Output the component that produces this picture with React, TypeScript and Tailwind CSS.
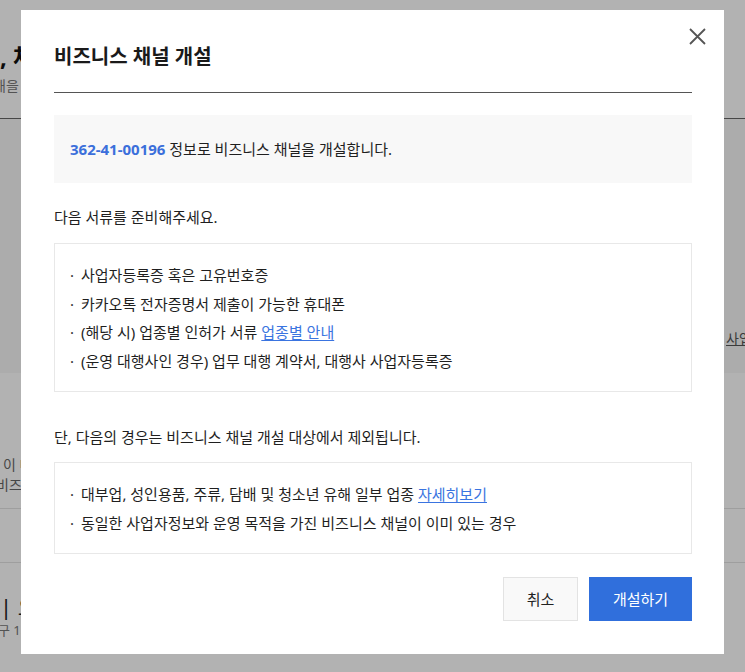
// 비즈니스 채널 개설 모달: 배경 페이지 위에 딤 처리된 오버레이와 안내 다이얼로그를 표시한다.
const FONT = "font-['Noto_Sans','Noto_Sans_CJK_KR',sans-serif]"

interface BulletBoxProps {
  items: React.ReactNode[]
}

// 회색 테두리 박스 안에 점 목록을 그린다.
const BulletBox = ({ items }: BulletBoxProps) => {
  return (
    <ul className="border border-[#e8e8e8] pl-[15px] pr-4 pt-[17px] pb-[16px]">
      {items.map((item, i) => (
        <li key={i} className="flex text-[15px] leading-[28.5px] text-[#1f1f1f]">
          <span className="w-[11px] shrink-0 text-[#333]">·</span>
          <span>{item}</span>
        </li>
      ))}
    </ul>
  )
}

// 모달 뒤에 깔린 페이지 (대부분 가려짐).
const BackgroundPage = () => {
  return (
    <div className="h-[672px] overflow-hidden bg-white">
      <div className="h-[119px] border-b border-[#666]">
        <div className="whitespace-nowrap pt-[42px] text-[24px] font-bold leading-[30px] text-[#111]">
          , 채널 관리자센터
        </div>
        <div className="-ml-[7px] whitespace-nowrap pt-[4px] text-[14px] leading-[20px] text-[#777]">
          채을 관리하고 운영해 보세요
        </div>
      </div>
      <div className="flex h-[254px] flex-col justify-end bg-[#f7f7f7] pb-[24px]">
        <div className="whitespace-nowrap pl-[726px] text-[14px] leading-[20px] text-[#555] underline">
          사업자 정보 수정
        </div>
      </div>
      <div className="h-[136px] border-b border-[#e2e2e2] pt-[82px]">
        <div className="whitespace-nowrap pl-[3px] text-[14px] leading-[20px] text-[#666]">이 미 등록된</div>
        <div className="-ml-[4px] whitespace-nowrap text-[14px] leading-[20px] text-[#666]">비즈니스 채널</div>
      </div>
      <div className="h-[54px] border-b border-[#e2e2e2]" />
      <div className="pt-[28px]">
        <div className="whitespace-nowrap text-[22px] leading-[30px] text-[#222]">| 오늘의 채널</div>
        <div className="-ml-[2px] whitespace-nowrap text-[13px] leading-[18px] text-[#777]">구 1개</div>
      </div>
    </div>
  )
}

export default function App() {
  return (
    <div className={`relative h-[672px] w-full overflow-hidden ${FONT}`}>
      <BackgroundPage />
      <div className="absolute inset-0 flex items-start justify-center bg-black/30 pt-[10px]">
        <div className="relative w-[703px] bg-white pb-[33px] pl-[33px] pr-[32px]">
          <button
            type="button"
            className="absolute right-[15px] top-[14px] flex h-[24px] w-[24px] items-center justify-center"
          >
            <svg width="17" height="17" viewBox="0 0 17 17" fill="none" stroke="#555" strokeWidth="1.8">
              <path d="M1 1 L16 16 M16 1 L1 16" />
            </svg>
          </button>

          <h2 className="border-b border-[#555] pb-[21px] pt-[33px] text-[20px] font-bold leading-[28px] text-[#1a1a1a]">
            비즈니스 채널 개설
          </h2>

          <div className="mt-[22px] flex h-[68px] items-center bg-[#f8f8f8] px-[16px] text-[15px] text-[#1f1f1f]">
            <span className="font-bold text-[#3b6fdb]">362-41-00196</span>
            <span>&nbsp;정보로 비즈니스 채널을 개설합니다.</span>
          </div>

          <p className="mt-[23px] text-[15px] leading-[22px] text-[#1f1f1f]">다음 서류를 준비해주세요.</p>
          <div className="mt-[15px]">
            <BulletBox
              items={[
                '사업자등록증 혹은 고유번호증',
                '카카오톡 전자증명서 제출이 가능한 휴대폰',
                <>
                  (해당 시) 업종별 인허가 서류{' '}
                  <a className="text-[#3a74e0] underline underline-offset-2">업종별 안내</a>
                </>,
                '(운영 대행사인 경우) 업무 대행 계약서, 대행사 사업자등록증',
              ]}
            />
          </div>

          <p className="mt-[34px] text-[15px] leading-[22px] text-[#1f1f1f]">
            단, 다음의 경우는 비즈니스 채널 개설 대상에서 제외됩니다.
          </p>
          <div className="mt-[14px]">
            <BulletBox
              items={[
                <>
                  대부업, 성인용품, 주류, 담배 및 청소년 유해 일부 업종{' '}
                  <a className="text-[#3a74e0] underline underline-offset-2">자세히보기</a>
                </>,
                '동일한 사업자정보와 운영 목적을 가진 비즈니스 채널이 이미 있는 경우',
              ]}
            />
          </div>

          <div className="mt-[23px] flex justify-end gap-[11px]">
            <button
              type="button"
              className="h-[44px] w-[75px] border border-[#e3e3e3] bg-[#f9f9f9] text-[15px] text-[#222]"
            >
              취소
            </button>
            <button type="button" className="h-[44px] w-[103px] bg-[#306fdc] text-[15px] text-white">
              개설하기
            </button>
          </div>
        </div>
      </div>
    </div>
  )
}
